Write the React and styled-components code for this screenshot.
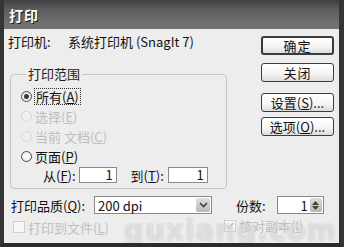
import React from 'react';
import styled, {createGlobalStyle} from 'styled-components';

const GlobalStyle = createGlobalStyle`
  html, body {
    margin: 0;
    padding: 0;
    background: #ececec;
  }
  body {
    font-family: "Noto Sans CJK SC", "Liberation Sans", sans-serif;
    font-size: 13px;
    color: #111;
  }
`;

const Window = styled.div`
  position: relative;
  width: 344px;
  height: 247px;
  box-sizing: border-box;
  display: flex;
  flex-direction: column;
  background: #ededed;
  border-left: 4px solid #353535;
  border-right: 5px solid #353535;
  border-bottom: 4px solid #2c2c2c;
  overflow: hidden;
`;

const TitleBar = styled.div`
  height: 29px;
  flex: none;
  margin: 0 -5px 0 -4px;
  padding-left: 9px;
  display: flex;
  align-items: center;
  background: linear-gradient(#3f3f3f, #5e5e5e 35%, #6c6c6c 70%, #737373);
  color: #fff;
  font-weight: bold;
  font-size: 14px;
  letter-spacing: 1px;
  text-shadow: 1px 1px 0 #222;
`;

const Body = styled.div`
  display: flex;
  flex-direction: column;
  padding: 0 0 0 4px;
`;

const Upper = styled.div`
  display: flex;
  justify-content: space-between;
`;

const LeftCol = styled.div`
  width: 224px;
  display: flex;
  flex-direction: column;
`;

const PrinterRow = styled.div`
  margin-top: 5px;
  height: 16px;
  line-height: 16px;
  display: flex;
`;

const PrinterLabel = styled.span`
  width: 60px;
`;

const Group = styled.fieldset`
  margin: 16px 0 0 2px;
  padding: 4px 0 5px 10px;
  border: 1px solid #c6c6c6;
  border-radius: 4px;
  min-width: 0;
  width: 217px;
  box-sizing: border-box;
`;

const Legend = styled.legend`
  padding: 0 2px;
  margin-left: 5px;
  line-height: 16px;
  color: #222;
`;

const RadioRow = styled.label`
  height: 20px;
  display: flex;
  align-items: center;
  gap: 3px;
  color: ${({disabled}) => (disabled ? '#bdbdbd' : '#111')};
`;

const RadioDot = styled.span`
  width: 11px;
  height: 11px;
  box-sizing: border-box;
  border-radius: 50%;
  border: 1px solid ${({disabled}) => (disabled ? '#d6d6d6' : '#4a4a4a')};
  background: ${({disabled}) => (disabled ? '#efefef' : 'radial-gradient(#ffffff, #e4e4e4)')};
  display: flex;
  align-items: center;
  justify-content: center;
  &::after {
    content: '';
    display: ${({checked}) => (checked ? 'block' : 'none')};
    width: 5px;
    height: 5px;
    border-radius: 50%;
    background: #3a3a3a;
  }
`;

const Focus = styled.span`
  outline: 1px dotted #333;
  outline-offset: 0;
  line-height: 15px;
  padding: 0 1px;
`;

const RangeRow = styled.div`
  display: flex;
  align-items: center;
  margin-top: 1px;
  height: 16px;
  padding-left: 22px;
`;

const Field = styled.div`
  width: ${({w}) => w}px;
  height: 16px;
  box-sizing: border-box;
  border: 1px solid #8a8a8a;
  background: #fff;
  text-align: right;
  padding-right: 3px;
  line-height: 14px;
  margin: 0 ${({mr}) => mr || 0}px 0 ${({ml}) => ml || 0}px;
`;

const ButtonCol = styled.div`
  width: 73px;
  margin-right: 5px;
  display: flex;
  flex-direction: column;
  padding-top: 7px;
`;

const Button = styled.div`
  height: 19px;
  margin-top: ${({mt}) => mt || 0}px;
  box-sizing: border-box;
  border: ${({primary}) => (primary ? '2px solid #3b3b3b' : '1px solid #3d3d3d')};
  border-radius: 3px;
  background: linear-gradient(#ffffff, #f4f4f4 60%, #dcdcdc);
  display: flex;
  align-items: center;
  justify-content: center;
  line-height: 16px;
  letter-spacing: ${({spread}) => (spread ? '0' : '1px')};
`;

const QualityRow = styled.div`
  display: flex;
  align-items: center;
  height: 18px;
  margin-top: 7px;
  padding-left: 3px;
`;

const Select = styled.div`
  width: 118px;
  height: 18px;
  box-sizing: border-box;
  margin-left: 9px;
  border: 1px solid #8a8a8a;
  background: #fff;
  display: flex;
  align-items: center;
  justify-content: space-between;
  padding: 0 1px 0 3px;
`;

const ArrowBtn = styled.div`
  width: 14px;
  height: 14px;
  background: linear-gradient(#e0e0e0, #b8b8b8);
  border-radius: 2px;
  display: flex;
  align-items: center;
  justify-content: center;
`;

const CopiesLabel = styled.span`
  margin-left: 24px;
`;

const Spinner = styled.div`
  width: 47px;
  height: 18px;
  box-sizing: border-box;
  margin-left: 11px;
  border: 1px solid #8a8a8a;
  background: #fff;
  display: flex;
  align-items: center;
  justify-content: flex-end;
  gap: 2px;
  padding-right: 1px;
`;

const SpinBtn = styled.div`
  width: 12px;
  height: 14px;
  background: linear-gradient(#dedede, #b5b5b5);
  border-radius: 2px;
  display: flex;
  flex-direction: column;
  align-items: center;
  justify-content: center;
  gap: 1px;
`;

const CheckRow = styled.div`
  display: flex;
  align-items: center;
  height: 16px;
  margin-top: 5px;
  padding-left: 5px;
  color: #c0c0c0;
`;

const Check = styled.span`
  width: 12px;
  height: 12px;
  box-sizing: border-box;
  border: 1px solid #cfcfcf;
  background: #f7f7f7;
  margin-right: 3px;
  display: flex;
  align-items: center;
  justify-content: center;
`;

const Collate = styled.div`
  display: flex;
  align-items: center;
  margin-left: 115px;
  margin-top: -3px;
`;

const Watermark = styled.div`
  position: absolute;
  right: 2px;
  bottom: -3px;
  line-height: 30px;
  font-family: "DejaVu Sans", sans-serif;
  font-size: 28px;
  font-weight: bold;
  letter-spacing: 1px;
  color: rgba(255, 255, 255, 0.5);
  text-shadow: 0 0 2px rgba(120, 120, 120, 0.45);
  pointer-events: none;
`;

const Chevron = () => (
    <svg width="9" height="6" viewBox="0 0 9 6">
        <path d="M1 1 L4.5 4.5 L8 1" stroke="#444" strokeWidth="1.6" fill="none"/>
    </svg>
);

const Tri = ({up}) => (
    <svg width="7" height="4" viewBox="0 0 7 4">
        <path d={up ? 'M0 4 L3.5 0 L7 4 Z' : 'M0 0 L3.5 4 L7 0 Z'} fill="#444"/>
    </svg>
);

const radios = [
    {text: '所有', key: 'A', checked: true, focus: true},
    {text: '选择', key: 'E', disabled: true},
    {text: '当前 文档', key: 'C', disabled: true},
    {text: '页面', key: 'P'},
];

const App = () => {
    return (
        <>
            <GlobalStyle/>
            <Window>
                <TitleBar>打印</TitleBar>
                <Body>
                    <Upper>
                        <LeftCol>
                            <PrinterRow>
                                <PrinterLabel>打印机:</PrinterLabel>
                                <span>系统打印机 (SnagIt 7)</span>
                            </PrinterRow>
                            <Group>
                                <Legend>打印范围</Legend>
                                {radios.map((r, i) => {
                                    const label = <>{r.text}(<u>{r.key}</u>)</>;
                                    return (
                                        <RadioRow key={i} disabled={r.disabled}>
                                            <RadioDot checked={r.checked} disabled={r.disabled}/>
                                            {r.focus ? <Focus>{label}</Focus> : <span>{label}</span>}
                                        </RadioRow>
                                    );
                                })}
                                <RangeRow>
                                    <span>从(<u>F</u>):</span>
                                    <Field w={38} ml={3} mr={14}>1</Field>
                                    <span>到(<u>T</u>):</span>
                                    <Field w={40} ml={4}>1</Field>
                                </RangeRow>
                            </Group>
                        </LeftCol>
                        <ButtonCol>
                            <Button primary>确定</Button>
                            <Button mt={8}>关闭</Button>
                            <Button mt={11} spread>设置(<u>S</u>)...</Button>
                            <Button mt={5} spread>选项(<u>O</u>)...</Button>
                        </ButtonCol>
                    </Upper>
                    <QualityRow>
                        <span>打印品质(<u>Q</u>):</span>
                        <Select>
                            <span>200 dpi</span>
                            <ArrowBtn><Chevron/></ArrowBtn>
                        </Select>
                        <CopiesLabel>份数:</CopiesLabel>
                        <Spinner>
                            <span>1</span>
                            <SpinBtn><Tri up/><Tri/></SpinBtn>
                        </Spinner>
                    </QualityRow>
                    <CheckRow>
                        <Check/>
                        <span>打印到文件(<u>L</u>)</span>
                        <Collate>
                            <Check>
                                <svg width="8" height="8" viewBox="0 0 8 8">
                                    <path d="M1 4 L3 6.5 L7 1" stroke="#bbb" strokeWidth="1.5" fill="none"/>
                                </svg>
                            </Check>
                            <span>核对副本(<u>I</u>)</span>
                        </Collate>
                    </CheckRow>
                </Body>
                <Watermark>guxiang.com</Watermark>
            </Window>
        </>
    );
};

export default App;
